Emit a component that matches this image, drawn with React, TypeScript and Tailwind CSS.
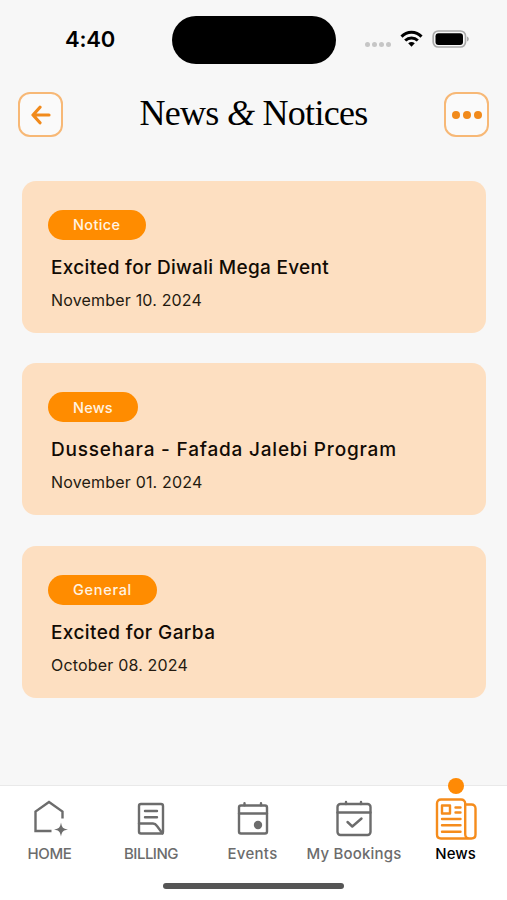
import type { ReactNode } from 'react'

interface NewsItem {
  id: number
  tag: string
  tagClass: string
  title: string
  titleClass: string
  date: string
}

const items: NewsItem[] = [
  {
    id: 1,
    tag: 'Notice',
    tagClass: 'w-[98px] tracking-[0.35px]',
    title: 'Excited for Diwali Mega Event',
    titleClass: 'tracking-[0.31px]',
    date: 'November 10. 2024',
  },
  {
    id: 2,
    tag: 'News',
    tagClass: 'w-[90px] tracking-[0.2px]',
    title: 'Dussehara - Fafada Jalebi Program',
    titleClass: 'tracking-[0.8px]',
    date: 'November 01. 2024',
  },
  {
    id: 3,
    tag: 'General',
    tagClass: 'w-[109px] tracking-[0.7px]',
    title: 'Excited for Garba',
    titleClass: 'tracking-[0.4px]',
    date: 'October 08. 2024',
  },
]

function StatusBar() {
  return (
    <div className="flex h-[78px] items-center">
      <div className="w-[171.500px] pl-[65px] text-[22px] font-semibold leading-none tracking-[-0.2px]">4:40</div>
      <div className="mt-px h-[48px] w-[164px] rounded-full bg-black" />
      <div className="ml-[29px] mt-[11px] flex gap-[2px]">
        <span className="size-[5px] rounded-full bg-[#c6c6c6]" />
        <span className="size-[5px] rounded-full bg-[#c6c6c6]" />
        <span className="size-[5px] rounded-full bg-[#c6c6c6]" />
        <span className="size-[5px] rounded-full bg-[#c6c6c6]" />
      </div>
      <svg className="ml-[9px]" width="23" height="18" viewBox="0 0 23 18" fill="none" stroke="#000" strokeWidth="3">
        <path d="M1.500 6.600C7 .9 16 .9 21.500 6.600" />
        <path d="M5.200 10.500c3.600-3.500 9-3.500 12.600 0" />
        <path d="M8.200 13.200c2-1.700 4.600-1.700 6.600 0l-3.300 3.600z" fill="#000" stroke="none" />
      </svg>
      <svg className="ml-[9px]" width="38" height="18" viewBox="0 0 38 18">
        <rect x="1.200" y="1" width="32.300" height="16" rx="5" fill="#f7f7f7" stroke="#aaa" strokeWidth="1.700" />
        <rect x="3.500" y="3.200" width="27.500" height="11.800" rx="3" fill="#000" />
        <path d="M35 6.500v5c2.400-.8 2.400-4.200 0-5z" fill="#aaa" />
      </svg>
    </div>
  )
}

function Header() {
  return (
    <header className="flex h-[73px] items-center justify-between px-[18px]">
      <button aria-label="Back" className="flex size-[45px] items-center justify-center rounded-[12px] border-2 border-[#f7b876] bg-[#fafafa]">
        <svg width="20" height="20" viewBox="0 0 20 20" fill="none" stroke="#f18a1b" strokeWidth="3.200" strokeLinecap="round" strokeLinejoin="round">
          <path d="M18 10H2.500M9 2.200L2 10l7 7.800" />
        </svg>
      </button>
      <h1 className="mb-[3px] whitespace-nowrap font-['Liberation_Serif',serif] text-[36px] leading-none tracking-[-0.7px]">
        News <span className="italic">&amp;</span> Notices
      </h1>
      <button aria-label="More" className="flex size-[45px] items-center justify-center gap-[3px] rounded-[12px] border-2 border-[#f7b876] bg-[#fafafa]">
        <span className="size-[8px] rounded-full bg-[#f18a1b]" />
        <span className="size-[8px] rounded-full bg-[#f18a1b]" />
        <span className="size-[8px] rounded-full bg-[#f18a1b]" />
      </button>
    </header>
  )
}

function NewsCard({ item }: { item: NewsItem }) {
  return (
    <article className="h-[152px] rounded-[14px] bg-[#fddfc1] pl-[26px] pt-[29px]">
      <div className={`flex h-[30px] items-center rounded-full bg-[#ff8c00] pl-[25px] text-[14.500px] font-medium text-[#fff3e2] ${item.tagClass}`}>
        {item.tag}
      </div>
      <h2 className={`ml-[3px] mt-[15px] whitespace-nowrap text-[19px] font-medium leading-[26px] text-[#120b04] ${item.titleClass}`}>
        {item.title}
      </h2>
      <p className="ml-[3px] mt-[7px] whitespace-nowrap text-[16px] leading-[24px] tracking-[0.18px] text-[#241a10]">
        {item.date}
      </p>
    </article>
  )
}

function NavItem({ label, labelClass, children }: { label: string; labelClass: string; children: ReactNode }) {
  return (
    <a className="flex w-[101.500px] flex-col items-center">
      <svg width="44" height="44" viewBox="0 0 44 44" fill="none" stroke="#6c6c6c" strokeWidth="2.400" strokeLinecap="round" strokeLinejoin="round">
        {children}
      </svg>
      <span className={`mt-[3px] whitespace-nowrap text-[15px] leading-[20px] ${labelClass}`}>{label}</span>
    </a>
  )
}

function BottomNav() {
  return (
    <nav className="flex h-[115px] flex-col items-center border-t border-[#e9e9e9] bg-white">
      <div className="relative mr-[2px] flex pt-[11px]">
        <NavItem label="HOME" labelClass="font-medium tracking-[-0.3px] text-[#6c6c6c]">
          <path d="M23.500 34H7.500V14.500L21 5l13.500 9.500v7" strokeLinecap="butt" strokeLinejoin="miter" />
          <path d="M33 25.500c1 5.200 2 6.200 7 7-5 1-6 2-7 7-1-5-2-6-7-7 5-.8 6-1.800 7-7z" fill="#6c6c6c" stroke="none" />
        </NavItem>
        <NavItem label="BILLING" labelClass="font-medium tracking-[-0.5px] text-[#6c6c6c]">
          <rect x="10" y="7" width="24" height="29.500" rx="2" />
          <path d="M16 14h12M16 20.300h12M10 26.500h14c2 0 3 1 4 2.500l5.500 7.500" />
        </NavItem>
        <NavItem label="Events" labelClass="tracking-[0.3px] font-medium text-[#6c6c6c]">
          <rect x="8" y="8.500" width="28" height="28" rx="2" />
          <path d="M8 16.500h28M13.500 6.200v2M30 6.200v2" />
          <circle cx="27" cy="28" r="4.200" fill="#6c6c6c" stroke="none" />
        </NavItem>
        <NavItem label="My Bookings" labelClass="tracking-[0.2px] font-medium text-[#6c6c6c]">
          <rect x="5.500" y="7" width="33" height="31" rx="3" />
          <path d="M5.500 15.500h33M14 5v2M29 5v2M15.500 25l4.800 4.500 9.200-8" />
        </NavItem>
        <NavItem label="News" labelClass="font-medium text-black">
          <g stroke="#f58c1c">
            <path d="M31.200 36V7.500c0-2.500-1.700-4-4.200-4H7c-2.500 0-4 1.500-4 4v31c0 2.500 1.500 4 4 4h30.500c2.500 0 4-1.500 4-4v-26c0-2.500-1.500-4-4-4h-6.300V38c0 2.800 1.500 4.500 4 4.500" transform="translate(0 -1)" />
            <rect x="8" y="8.500" width="8" height="8" />
            <path d="M21.500 10.500h5M21.500 15.500h5M8 22h18.500M8 28.300h18.500M8 34.700h18.500" />
          </g>
        </NavItem>
        <span className="absolute right-[42.500px] top-[-8px] size-[16px] rounded-full bg-[#ff8a05]" />
      </div>
      <div className="mt-[19px] h-[6px] w-[181px] rounded-full bg-[#555]" />
    </nav>
  )
}

export default function App() {
  return (
    <div className="flex h-[900px] w-[507px] flex-col overflow-hidden bg-[#f7f7f7] font-[Inter,sans-serif] text-black">
      <StatusBar />
      <Header />
      <main className="flex flex-1 flex-col gap-[30.400px] pl-[22px] pr-[21px] pt-[30px]">
        {items.map((item) => (
          <NewsCard key={item.id} item={item} />
        ))}
      </main>
      <BottomNav />
    </div>
  )
}
